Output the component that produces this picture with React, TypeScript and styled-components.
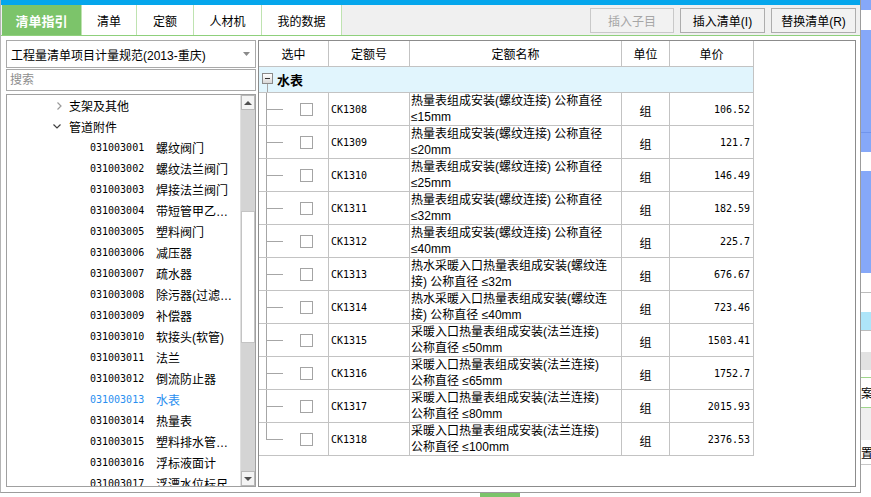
import React from 'react';
import styled, { createGlobalStyle } from 'styled-components';

const GlobalStyle = createGlobalStyle`
  html, body {
    margin: 0;
    padding: 0;
    background: #fff;
  }
  body {
    font-family: "Liberation Sans", "Noto Sans CJK SC", sans-serif;
    font-size: 12px;
    color: #000;
  }
  * {
    box-sizing: border-box;
  }
`;

const MONO = `"DejaVu Sans Mono", "Liberation Mono", monospace`;
const GRID_LINE = '#c3c3c3';
const TREE_LINE = '#a6a6a6';

interface TreeChild {
  code: string;
  name: string;
  active?: boolean;
}

interface QuotaRow {
  code: string;
  lines: string[];
  unit: string;
  price: string;
}

const tabs = [
  { label: '清单指引', width: 80, active: true },
  { label: '清单', width: 55 },
  { label: '定额', width: 57 },
  { label: '人材机', width: 68 },
  { label: '我的数据', width: 80 },
];

const treeChildren: TreeChild[] = [
  { code: '031003001', name: '螺纹阀门' },
  { code: '031003002', name: '螺纹法兰阀门' },
  { code: '031003003', name: '焊接法兰阀门' },
  { code: '031003004', name: '带短管甲乙…' },
  { code: '031003005', name: '塑料阀门' },
  { code: '031003006', name: '减压器' },
  { code: '031003007', name: '疏水器' },
  { code: '031003008', name: '除污器(过滤…' },
  { code: '031003009', name: '补偿器' },
  { code: '031003010', name: '软接头(软管)' },
  { code: '031003011', name: '法兰' },
  { code: '031003012', name: '倒流防止器' },
  { code: '031003013', name: '水表', active: true },
  { code: '031003014', name: '热量表' },
  { code: '031003015', name: '塑料排水管…' },
  { code: '031003016', name: '浮标液面计' },
  { code: '031003017', name: '浮漂水位标尺' },
];

const screwed = '热量表组成安装(螺纹连接) 公称直径';
const flanged = '采暖入口热量表组成安装(法兰连接)';

const rows: QuotaRow[] = [
  { code: 'CK1308', lines: [screwed, '≤15mm'], unit: '组', price: '106.52' },
  { code: 'CK1309', lines: [screwed, '≤20mm'], unit: '组', price: '121.7' },
  { code: 'CK1310', lines: [screwed, '≤25mm'], unit: '组', price: '146.49' },
  { code: 'CK1311', lines: [screwed, '≤32mm'], unit: '组', price: '182.59' },
  { code: 'CK1312', lines: [screwed, '≤40mm'], unit: '组', price: '225.7' },
  { code: 'CK1313', lines: ['热水采暖入口热量表组成安装(螺纹连', '接) 公称直径 ≤32m'], unit: '组', price: '676.67' },
  { code: 'CK1314', lines: ['热水采暖入口热量表组成安装(螺纹连', '接) 公称直径 ≤40mm'], unit: '组', price: '723.46' },
  { code: 'CK1315', lines: [flanged, '公称直径 ≤50mm'], unit: '组', price: '1503.41' },
  { code: 'CK1316', lines: [flanged, '公称直径 ≤65mm'], unit: '组', price: '1752.7' },
  { code: 'CK1317', lines: [flanged, '公称直径 ≤80mm'], unit: '组', price: '2015.93' },
  { code: 'CK1318', lines: [flanged, '公称直径 ≤100mm'], unit: '组', price: '2376.53' },
];

const stripBlocks = [
  { h: 10, bg: '#86a8f8' },
  { h: 20, bg: '#ffffff' },
  { h: 103, bg: '#86a8f8', line: '#7094ec' },
  { h: 19, bg: '#86a8f8' },
  { h: 19, bg: '#ffffff' },
  { h: 102, bg: '#86a8f8' },
  { h: 20, bg: '#ffffff', line: '#bcbcbc' },
  { h: 19, bg: '#ffffff' },
  { h: 19, bg: '#aee5f9', line: '#bcbcbc' },
  { h: 21, bg: '#ffffff' },
  { h: 18, bg: '#e2e2e2' },
  { h: 8, bg: '#ffffff', line: '#9fd68b' },
  { h: 30, bg: '#ffffff', line: '#9fd68b', text: '案' },
  { h: 32, bg: '#efefef' },
  { h: 25, bg: '#ffffff', line: '#c8c8c8', text: '置' },
  { h: 32, bg: '#ffffff' },
];

const Page = styled.div`
  display: flex;
  width: 871px;
  height: 497px;
  overflow: hidden;
`;

const Main = styled.div`
  display: flex;
  flex-direction: column;
  width: 861px;
`;

const Dialog = styled.div`
  display: flex;
  flex-direction: column;
  height: 493px;
  border-left: 1px solid #b4b4b4;
  border-right: 1px solid #9c9c9c;
  border-bottom: 1px solid #9c9c9c;
  background: #fff;
`;

const TitleStrip = styled.div`
  height: 5px;
  background: #05a6ec;
`;

const TabBar = styled.div`
  display: flex;
  height: 31px;
  padding-left: 1px;
  padding-right: 4px;
  background: #f0f0f0;
  border-bottom: 1px solid #8fd07c;
`;

const Tab = styled.div<{ $width: number; $active?: boolean }>`
  display: flex;
  align-items: center;
  justify-content: center;
  width: ${(p) => p.$width}px;
  background: ${(p) => (p.$active ? '#7cc46a' : '#fff')};
  border-right: 1px solid #bfe3b1;
  color: ${(p) => (p.$active ? '#fff' : '#000')};
  font-size: ${(p) => (p.$active ? 13 : 12)}px;
  font-weight: ${(p) => (p.$active ? 700 : 400)};
`;

const Actions = styled.div`
  display: flex;
  align-items: center;
  gap: 6px;
  margin-left: auto;
`;

const ActionButton = styled.button<{ $width: number }>`
  width: ${(p) => p.$width}px;
  height: 25px;
  padding: 0;
  border: 1px solid #adadad;
  background: #f2f2f2;
  font-family: inherit;
  font-size: 12px;
  color: #000;

  &:disabled {
    border-color: #c9c9c9;
    color: #a6a6a6;
  }
`;

const Body = styled.div`
  display: flex;
  flex: 1;
  gap: 2px;
  padding: 4px 4px 5px 5px;
  min-height: 0;
`;

const LeftPanel = styled.div`
  display: flex;
  flex-direction: column;
  width: 250px;
`;

const ComboBox = styled.div`
  display: flex;
  align-items: center;
  justify-content: space-between;
  height: 28px;
  padding: 0 5px 0 4px;
  border: 1px solid #a9a9a9;
  background: #fff;
`;

const SearchInput = styled.input`
  height: 22px;
  margin-top: 1px;
  padding: 0 3px;
  border: 1px solid #a9a9a9;
  outline: none;
  font-family: inherit;
  font-size: 12px;

  &::placeholder {
    color: #8e8e8e;
  }
`;

const TreeBox = styled.div`
  display: flex;
  flex: 1;
  margin-top: 3px;
  border: 1px solid #a0a0a0;
  min-height: 0;
`;

const TreeList = styled.div`
  flex: 1;
  overflow: hidden;
`;

const TreeRow = styled.div<{ $indent: number; $active?: boolean }>`
  display: flex;
  align-items: center;
  height: 21px;
  padding-left: ${(p) => p.$indent}px;
  color: ${(p) => (p.$active ? '#2a8ff0' : '#000')};
  white-space: nowrap;
`;

const Expander = styled.span`
  display: flex;
  align-items: center;
  width: 14px;
`;

const TreeCode = styled.span`
  width: 66px;
  font-family: ${MONO};
  font-size: 10px;
`;

const ScrollBar = styled.div`
  display: flex;
  flex-direction: column;
  width: 15px;
  background: #d4d4d4;
  border-left: 1px solid #e0e0e0;
`;

const ScrollButton = styled.div`
  display: flex;
  align-items: center;
  justify-content: center;
  height: 15px;
  background: #f4f4f4;
  border: 1px solid #b8b8b8;
`;

const ScrollGap = styled.div<{ $h?: number }>`
  ${(p) => (p.$h ? `height: ${p.$h}px;` : 'flex: 1;')}
`;

const ScrollThumb = styled.div`
  height: 132px;
  background: #fff;
  border: 1px solid #c4c4c4;
`;

const GridBox = styled.div`
  flex: 1;
  border: 1px solid #8c8c8c;
  background: #fff;
  overflow: hidden;
`;

const Grid = styled.div`
  display: grid;
  grid-template-columns: 70px 81px 212px 48px 84px;
  width: 495px;
`;

const Cell = styled.div`
  display: flex;
  border-right: 1px solid ${GRID_LINE};
  border-bottom: 1px solid ${GRID_LINE};
  min-width: 0;
`;

const HeadCell = styled(Cell)`
  height: 26px;
  align-items: center;
  justify-content: center;
`;

const GroupCell = styled(Cell)`
  grid-column: 1 / -1;
  height: 26px;
  padding-left: 3px;
  background: #e1f5fd;
`;

const GroupToggle = styled.div`
  display: flex;
  flex-direction: column;
  padding-top: 6px;
`;

const MinusBox = styled.div`
  display: flex;
  align-items: center;
  justify-content: center;
  width: 11px;
  height: 11px;
  border: 1px solid #8a8a8a;
  background: linear-gradient(#ffffff, #d8d8d8);

  &::before {
    content: '';
    width: 5px;
    height: 1px;
    background: #333;
  }
`;

const Stem = styled.div`
  flex: 1;
  margin-left: 5px;
  border-left: 1px solid ${TREE_LINE};
`;

const GroupLabel = styled.span`
  align-self: center;
  margin-left: 4px;
  font-size: 13px;
  font-weight: 700;
`;

const SelectCell = styled(Cell)`
  height: 33px;
  padding-left: 7px;
`;

const Connector = styled.div`
  display: flex;
  flex-direction: column;
  width: 17px;
`;

const ConnectorTop = styled.div`
  flex: 1;
  border-left: 1px solid ${TREE_LINE};
  border-bottom: 1px solid ${TREE_LINE};
`;

const ConnectorBottom = styled.div<{ $last?: boolean }>`
  flex: 1;
  border-left: 1px solid ${(p) => (p.$last ? 'transparent' : TREE_LINE)};
`;

const CheckBox = styled.div`
  align-self: center;
  width: 13px;
  height: 13px;
  margin-left: 17px;
  border: 1px solid #a4a4a4;
  background: #fff;
`;

const CodeCell = styled(Cell)`
  align-items: center;
  padding-left: 2px;
  font-family: ${MONO};
  font-size: 10px;
`;

const NameCell = styled(Cell)`
  flex-direction: column;
  padding-left: 1px;
  line-height: 16px;
  white-space: nowrap;
  overflow: hidden;
`;

const UnitCell = styled(Cell)`
  align-items: center;
  justify-content: center;
  padding-top: 3px;
`;

const PriceCell = styled(Cell)`
  align-items: center;
  justify-content: flex-end;
  padding-right: 3px;
  font-family: ${MONO};
  font-size: 10px;
`;

const Below = styled.div`
  display: flex;
  flex: 1;
  background: #fff;
`;

const BelowButton = styled.div`
  width: 40px;
  margin-left: 480px;
  background: #7cc46a;
`;

const Strip = styled.div`
  display: flex;
  flex-direction: column;
  width: 10px;
`;

const StripBlock = styled.div<{ $h: number; $bg: string; $line?: string }>`
  display: flex;
  align-items: center;
  height: ${(p) => p.$h}px;
  background: ${(p) => p.$bg};
  border-bottom: ${(p) => (p.$line ? `1px solid ${p.$line}` : 'none')};
  overflow: hidden;
  font-size: 12px;
  white-space: nowrap;
`;

function Chevron({ open }: { open?: boolean }) {
  if (open) {
    return (
      <svg width="8" height="5" viewBox="0 0 8 5">
        <path d="M0.5 0.5 L4 4 L7.5 0.5" fill="none" stroke="#404040" strokeWidth="1.2" />
      </svg>
    );
  }
  return (
    <svg width="5" height="8" viewBox="0 0 5 8" style={{ marginLeft: 2 }}>
      <path d="M0.5 0.5 L4 4 L0.5 7.5" fill="none" stroke="#9a9a9a" strokeWidth="1.2" />
    </svg>
  );
}

function Triangle({ up }: { up?: boolean }) {
  return (
    <svg width="8" height="4" viewBox="0 0 8 4">
      <path d={up ? 'M0 4 L4 0 L8 4 Z' : 'M0 0 L8 0 L4 4 Z'} fill="#505050" />
    </svg>
  );
}

export default function App() {
  return (
    <Page>
      <GlobalStyle />
      <Main>
        <Dialog>
          <TitleStrip />
          <TabBar>
            {tabs.map((t) => (
              <Tab key={t.label} $width={t.width} $active={t.active}>
                {t.label}
              </Tab>
            ))}
            <Actions>
              <ActionButton $width={84} disabled>
                插入子目
              </ActionButton>
              <ActionButton $width={85}>插入清单(I)</ActionButton>
              <ActionButton $width={85}>替换清单(R)</ActionButton>
            </Actions>
          </TabBar>

          <Body>
            <LeftPanel>
              <ComboBox>
                <span>工程量清单项目计量规范(2013-重庆)</span>
                <svg width="7" height="4" viewBox="0 0 7 4">
                  <path d="M0 0 L7 0 L3.5 4 Z" fill="#8a8a8a" />
                </svg>
              </ComboBox>
              <SearchInput placeholder="搜索" />
              <TreeBox>
                <TreeList>
                  <TreeRow $indent={48}>
                    <Expander>
                      <Chevron />
                    </Expander>
                    支架及其他
                  </TreeRow>
                  <TreeRow $indent={46}>
                    <Expander style={{ width: 16 }}>
                      <Chevron open />
                    </Expander>
                    管道附件
                  </TreeRow>
                  {treeChildren.map((c) => (
                    <TreeRow key={c.code} $indent={83} $active={c.active}>
                      <TreeCode>{c.code}</TreeCode>
                      {c.name}
                    </TreeRow>
                  ))}
                </TreeList>
                <ScrollBar>
                  <ScrollButton>
                    <Triangle up />
                  </ScrollButton>
                  <ScrollGap $h={101} />
                  <ScrollThumb />
                  <ScrollGap />
                  <ScrollButton>
                    <Triangle />
                  </ScrollButton>
                </ScrollBar>
              </TreeBox>
            </LeftPanel>

            <GridBox>
              <Grid>
                <HeadCell>选中</HeadCell>
                <HeadCell>定额号</HeadCell>
                <HeadCell>定额名称</HeadCell>
                <HeadCell>单位</HeadCell>
                <HeadCell>单价</HeadCell>

                <GroupCell>
                  <GroupToggle>
                    <MinusBox />
                    <Stem />
                  </GroupToggle>
                  <GroupLabel>水表</GroupLabel>
                </GroupCell>

                {rows.map((r, i) => (
                  <React.Fragment key={r.code}>
                    <SelectCell>
                      <Connector>
                        <ConnectorTop />
                        <ConnectorBottom $last={i === rows.length - 1} />
                      </Connector>
                      <CheckBox />
                    </SelectCell>
                    <CodeCell>{r.code}</CodeCell>
                    <NameCell>
                      {r.lines.map((l) => (
                        <span key={l}>{l}</span>
                      ))}
                    </NameCell>
                    <UnitCell>{r.unit}</UnitCell>
                    <PriceCell>{r.price}</PriceCell>
                  </React.Fragment>
                ))}
              </Grid>
            </GridBox>
          </Body>
        </Dialog>
        <Below>
          <BelowButton />
        </Below>
      </Main>
      <Strip>
        {stripBlocks.map((b, i) => (
          <StripBlock key={i} $h={b.h} $bg={b.bg} $line={b.line}>
            {b.text}
          </StripBlock>
        ))}
      </Strip>
    </Page>
  );
}
